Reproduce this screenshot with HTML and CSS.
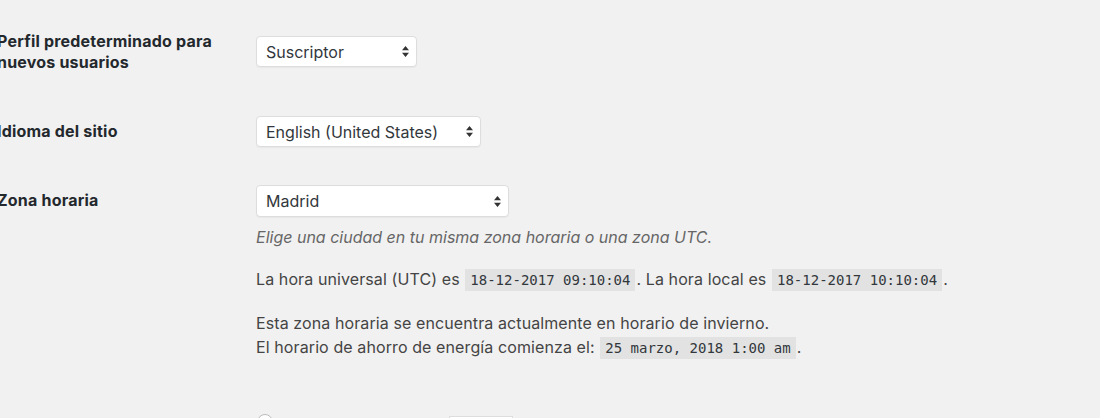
FILE: index.html
```html
<!DOCTYPE html>
<html lang="es">
  <head>
    <meta charset="UTF-8" />
    <title>Ajustes generales</title>
    <link rel="stylesheet" href="styles.css">
  </head>
  <body>
    <div class="form-table">
      <div class="row row--double">
        <label class="th" for="default_role">Perfil predeterminado para nuevos usuarios</label>
        <div class="td">
          <span class="select select--role">
            <select id="default_role">
              <option>Suscriptor</option>
            </select>
            <svg class="select-arrows" viewBox="0 0 7 11" aria-hidden="true">
              <path d="M3.5 0 L7 4.2 L0 4.2 Z M3.5 11 L7 6.8 L0 6.8 Z" />
            </svg>
          </span>
        </div>
      </div>

      <div class="row">
        <label class="th" for="WPLANG">Idioma del sitio</label>
        <div class="td">
          <span class="select select--lang">
            <select id="WPLANG">
              <option>English (United States)</option>
            </select>
            <svg class="select-arrows" viewBox="0 0 7 11" aria-hidden="true">
              <path d="M3.5 0 L7 4.2 L0 4.2 Z M3.5 11 L7 6.8 L0 6.8 Z" />
            </svg>
          </span>
        </div>
      </div>

      <div class="row">
        <label class="th" for="timezone_string">Zona horaria</label>
        <div class="td">
          <span class="select select--tz">
            <select id="timezone_string">
              <option>Madrid</option>
            </select>
            <svg class="select-arrows" viewBox="0 0 7 11" aria-hidden="true">
              <path d="M3.5 0 L7 4.2 L0 4.2 Z M3.5 11 L7 6.8 L0 6.8 Z" />
            </svg>
          </span>
          <p class="description">Elige una ciudad en tu misma zona horaria o una zona UTC.</p>
          <p class="timezone-info">
            La hora universal (UTC) es <code>18-12-2017 09:10:04</code>. La hora local es <code>18-12-2017 10:10:04</code>.
          </p>
          <p class="timezone-info">
            Esta zona horaria se encuentra actualmente en horario de invierno.<br />
            El horario de ahorro de energía comienza el: <code>25 marzo, 2018 1:00 am</code>.
          </p>
        </div>
      </div>

      <div class="row">
        <div class="th"></div>
        <div class="td">
          <div class="date-format">
            <span class="radio"></span>
            <span class="custom-input"></span>
          </div>
        </div>
      </div>
    </div>
  </body>
</html>
```

FILE: styles.css
```css
body {
  margin: 0;
  background: #f1f1f1;
  color: #444;
  font-family: 'Inter', 'Liberation Sans', sans-serif;
  font-size: 16px;
  letter-spacing: 0.1px;
  height: 418px;
  overflow: hidden;
}
.form-table {
  display: flex;
  flex-direction: column;
  padding-top: 17px;
  margin-left: -3px;
}
.row {
  display: grid;
  grid-template-columns: 249px 1fr;
}
.th {
  display: block;
  padding: 24px 0 23px 0;
  font-weight: 700;
  letter-spacing: 0.2px;
  color: #23282d;
  line-height: 21px;
  white-space: nowrap;
}
.row--double .th {
  padding-top: 14px;
  padding-bottom: 24px;
  white-space: normal;
  width: 225px;
}
.td {
  padding: 19px 10px;
  line-height: 24px;
}
.select {
  display: inline-grid;
  align-items: center;
  height: 31px;
}
.select select {
  grid-area: 1 / 1;
  appearance: none;
  height: 31px;
  margin: 0;
  padding: 0 24px 0 9px;
  font: inherit;
  color: #32373c;
  background: #fff;
  border: 1px solid #ddd;
  border-radius: 4px;
  box-shadow: 0 1px 1px rgba(0, 0, 0, 0.04);
}
.select--role select {
  width: 161px;
}
.select--lang select {
  width: 225px;
}
.select--tz,
.select--tz select {
  height: 32px;
}
.select--tz select {
  width: 253px;
}
.select-arrows {
  grid-area: 1 / 1;
  justify-self: end;
  width: 7px;
  height: 11px;
  margin-right: 8px;
  fill: #333;
  pointer-events: none;
}
.td p {
  margin: 0;
}
.description {
  margin-top: 8px !important;
  font-style: italic;
  letter-spacing: 0;
  color: #666;
}
.timezone-info {
  margin-top: 18px !important;
}
.timezone-info + .timezone-info {
  margin-top: 19px !important;
}
code {
  font-family: 'DejaVu Sans Mono', monospace;
  font-size: 14px;
  letter-spacing: 0;
  color: #32373c;
  background: rgba(0, 0, 0, 0.06);
  padding: 3px 5px 3px;
  margin: 0 1px;
}
.date-format {
  display: flex;
  align-items: flex-start;
  padding-top: 16px;
}
.radio {
  width: 14px;
  height: 14px;
  border: 1px solid #bbb;
  border-radius: 50%;
  background: #fff;
  margin-left: 1px;
}
.custom-input {
  width: 62px;
  height: 26px;
  margin: 2px 0 0 176px;
  border: 1px solid #ddd;
  background: #fff;
}
```
